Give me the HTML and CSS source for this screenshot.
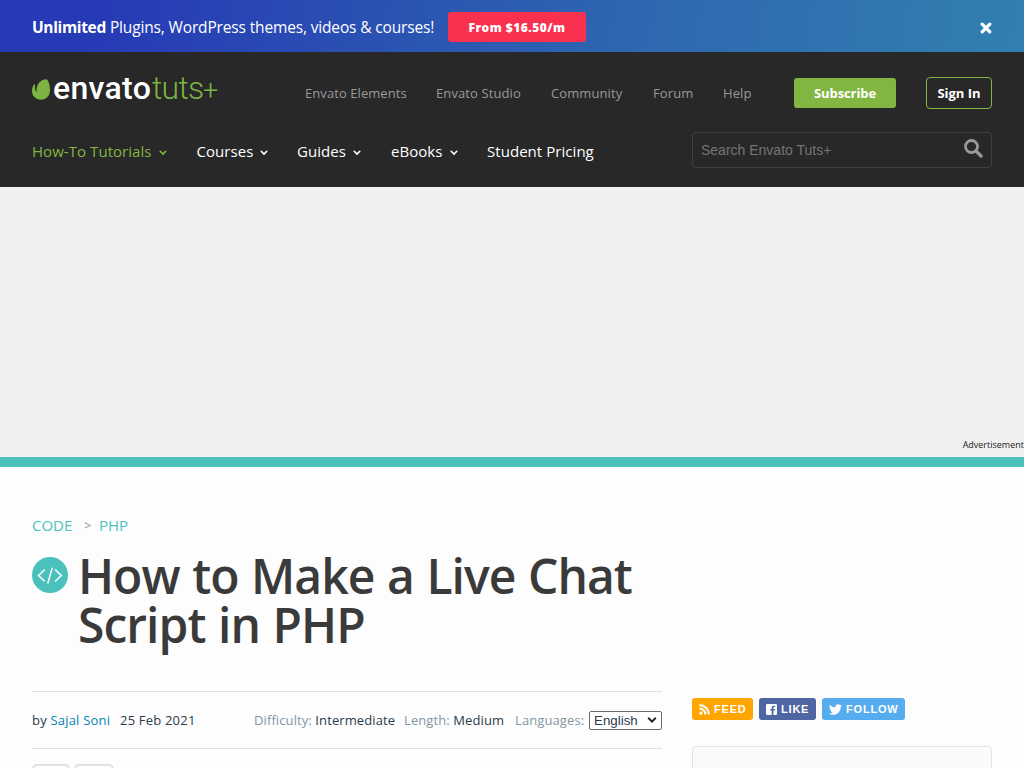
FILE: index.html
```html
<!DOCTYPE html>
<html lang="en">
<head>
<meta charset="utf-8">
<title>How to Make a Live Chat Script in PHP</title>
<link rel="stylesheet" href="styles.css">
</head>
<body>
<svg class="sprites" width="0" height="0"><symbol id="chev" viewBox="0 0 8 6"><path d="M1.2 1.3 4 4.1 6.8 1.3" fill="none" stroke="currentColor" stroke-width="1.6" stroke-linecap="round"/></symbol></svg>
<div class="promo">
  <p class="promo-text"><b>Unlimited</b> <span>Plugins, WordPress themes, videos &amp; courses!</span></p>
  <a class="promo-btn">From $16.50/m</a>
  <svg class="close" viewBox="0 0 12 12"><path d="M2.2 2.2 9.8 9.8M9.8 2.2 2.2 9.8" stroke="#fff" stroke-width="3.2" stroke-linecap="round"/></svg>
</div>
<header class="header">
  <div class="row top">
    <div class="logo">
      <svg class="leaf" viewBox="0 0 18 21"><path d="M14.8.4C16.600 1.500 18 6.500 18 11C18 17 14 20.700 9 20.700C3.800 20.700 0 17 0 12C0 9 .9 6.500 2.300 5.200C2.900 4.900 3.100 5.300 3 6C2.700 9 3.100 11.500 4.700 13.300C3.800 8.500 5.500 4.500 8.800 2.200C11 .6 13.600-.1 14.800.4Z" fill="#7cb342"/></svg>
      <span class="envato">envato</span><span class="tuts">tuts</span><span class="plus">+</span>
    </div>
    <nav class="links"><a class="l1">Envato Elements</a><a class="l2">Envato Studio</a><a class="l3">Community</a><a class="l4">Forum</a><a class="l5">Help</a></nav>
    <a class="subscribe">Subscribe</a><a class="signin">Sign In</a>
  </div>
  <div class="row bottom">
    <nav class="main">
      <a class="m1">How-To Tutorials<svg><use href="#chev"/></svg></a>
      <a class="m2">Courses<svg><use href="#chev"/></svg></a>
      <a class="m3">Guides<svg><use href="#chev"/></svg></a>
      <a class="m4">eBooks<svg><use href="#chev"/></svg></a>
      <a class="m5">Student Pricing</a>
    </nav>
    <div class="search"><span>Search Envato Tuts+</span><svg viewBox="0 0 19 19"><circle cx="7.500" cy="7.500" r="6" fill="none" stroke="#999" stroke-width="2.800"/><path d="m12.200 12.200 4.900 4.900" stroke="#999" stroke-width="3.300" stroke-linecap="round"/></svg></div>
  </div>
</header>
<div class="ad"><span>Advertisement</span></div>
<main class="page">
  <article class="content">
    <div class="crumbs"><a class="c1">CODE</a><i>&gt;</i><a class="c2">PHP</a></div>
    <div class="title">
      <svg class="code" viewBox="0 0 36 36"><circle cx="18" cy="18" r="18" fill="#4bc1be"/><path d="m12.700 12.500-6.200 6 6.200 6m10.400-12 6.200 6-6.200 6M20.300 10.800l-4.600 15.700" fill="none" stroke="#fff" stroke-width="1.500"/></svg>
      <h1>How to Make a Live Chat<br>Script in PHP</h1>
    </div>
    <div class="meta">
      <span class="by">by <a>Sajal Soni</a></span><span class="date">25 Feb 2021</span>
      <span class="diff"><em>Difficulty:</em> Intermediate</span>
      <span class="len"><em>Length:</em> Medium</span>
      <span class="lang"><em>Languages:</em></span>
      <span class="select">English<svg viewBox="0 0 10 8"><path d="m1.200 1.800 3.800 3.800 3.800-3.800" fill="none" stroke="#222" stroke-width="2"/></svg></span>
    </div>
    <div class="pills"><span></span><span></span></div>
  </article>
  <aside class="side">
    <div class="social">
      <a class="feed"><svg viewBox="0 0 12 12"><circle cx="2" cy="10" r="1.700" fill="#fff"/><path d="M.5 5a6.500 6.500 0 0 1 6.500 6.500M.5 1.200A10.300 10.300 0 0 1 10.800 11.500" fill="none" stroke="#fff" stroke-width="2.300"/></svg>FEED</a>
      <a class="like"><svg viewBox="0 0 12 12"><path d="M1.300 0h9.400A1.300 1.300 0 0 1 12 1.300v9.400a1.300 1.300 0 0 1-1.300 1.300H8.100V7.200h1.500l.3-1.800H8.100V4.300c0-.6.300-.9.900-.9h1V1.900H8.400C6.900 1.900 6.200 2.800 6.200 4.200v1.200H4.800v1.800h1.400V12H1.300A1.300 1.300 0 0 1 0 10.700V1.300A1.300 1.300 0 0 1 1.300 0Z" fill="#fff"/></svg>LIKE</a>
      <a class="follow"><svg viewBox="0 0 24 24"><path d="M24 4.600c-.9.400-1.800.7-2.800.8 1-.6 1.800-1.600 2.200-2.700-1 .6-2 1-3.100 1.200a4.900 4.900 0 0 0-8.400 4.500C7.700 8.200 4.100 6.300 1.700 3.200a4.900 4.900 0 0 0 1.500 6.500c-.8 0-1.600-.2-2.200-.6v.1a4.900 4.900 0 0 0 3.900 4.800c-.7.200-1.500.2-2.200.1a4.900 4.900 0 0 0 4.600 3.400A9.900 9.900 0 0 1 0 19.500a14 14 0 0 0 7.500 2.200c9.100 0 14.300-7.700 14-14.600 1-.7 1.800-1.600 2.500-2.500Z" fill="#fff"/></svg>FOLLOW</a>
    </div>
    <div class="card"></div>
  </aside>
</main>
</body>
</html>
```
FILE: styles.css
```css
* { box-sizing: border-box; }
html, body { height: 768px; overflow: hidden; }
body { margin: 0; background: #fdfdfd; font-family: "Open Sans", "Noto Sans", sans-serif; color: #3a3a3a; display: flex; flex-direction: column; }
a, span, em, i, b { white-space: nowrap; }
svg { flex: none; }
.sprites { display: none; }
.promo { height: 52px; flex: none; display: flex; align-items: center; padding: 0 32px; color: #fff; background: linear-gradient(100deg, #263ab5 10%, #2e67b0 62%, #3180b0 100%); }
.promo-text { margin: 1px 0 0; width: 416px; font-size: 15.500px; line-height: 24px; }
.promo-text b { letter-spacing: -.35px; }
.promo-text span { letter-spacing: -.15px; }
.promo-btn { width: 138px; height: 30px; margin-top: 2px; border-radius: 3px; background: #f9314f; font-weight: 800; font-size: 12px; line-height: 31px; text-align: center; letter-spacing: .5px; }
.close { width: 12px; height: 12px; margin: 4px 0 0 auto; }
.header { height: 135px; flex: none; background: #282828; padding: 25px 32px 0; }
.row { display: flex; }
.top { height: 55px; align-items: flex-start; }
.logo { width: 273px; height: 32px; display: flex; align-items: flex-start; font-family: Roboto, sans-serif; line-height: 22px; }
.leaf { width: 18px; height: 21px; margin-top: 2px; }
.envato { font-weight: 500; font-size: 32px; letter-spacing: .3px; color: #fff; width: 99px; margin-left: 3px; }
.tuts { width: 51px; font-weight: 300; font-size: 32px; letter-spacing: -.7px; color: #7cb342; }
.plus { font-weight: 300; font-size: 27px; line-height: 28px; color: #7cb342; }
.links { display: flex; font-size: 13px; line-height: 32px; letter-spacing: .1px; color: #999; }
.l1 { width: 131px; letter-spacing: .07px; } .l2 { width: 115px; } .l3 { width: 102px; } .l4 { width: 70px; } .l5 { width: 71px; }
.subscribe { width: 102px; height: 30px; margin-top: 1px; border-radius: 3px; background: #82b541; color: #fff; font-weight: 700; font-size: 13px; line-height: 30px; text-align: center; letter-spacing: -.1px; }
.signin { width: 66px; height: 32px; margin-left: 30px; border: 1px solid #82b541; border-radius: 4px; color: #fff; font-weight: 700; font-size: 13px; line-height: 30px; text-align: center; }
.main { width: 660px; display: flex; padding-top: 7px; font-size: 15px; line-height: 24px; letter-spacing: .05px; color: #fff; }
.main svg { width: 8px; height: 6px; margin-left: 7px; vertical-align: 1px; }
.m1 { width: 164.500px; color: #82b541; } .m2 { width: 100.500px; } .m3 { width: 94px; } .m4 { width: 96px; }
.search { width: 300px; height: 36px; border: 1px solid #404040; border-radius: 4px; padding: 0 8px; display: flex; justify-content: space-between; font: 14px/34px "Liberation Sans", Arial, sans-serif; color: #757575; }
.search svg { width: 19px; height: 19px; margin-top: 6px; }
.ad { height: 280px; flex: none; border-bottom: 10px solid #4bc1be; background: repeating-linear-gradient(45deg, #f5f5f5 0 1.414px, #ebebeb 1.414px 2.828px); display: flex; align-items: flex-end; justify-content: flex-end; }
.ad span { font-size: 9px; line-height: 12px; padding-bottom: 6px; color: #222; }
.page { display: flex; padding: 0 32px; }
.content { width: 630px; }
.crumbs { padding-top: 46px; height: 83px; display: flex; font-size: 15px; line-height: 24px; color: #4bc1be; }
.c1 { width: 52px; } .crumbs i { width: 15px; font-style: normal; font-size: 13px; color: #8795a0; }
.title { height: 141px; display: flex; }
.code { width: 36px; height: 36px; margin-top: 7px; }
h1 { margin: 1px 0 0 10px; font-weight: 550; font-size: 48px; line-height: 49px; letter-spacing: -.95px; word-spacing: 1px; }
.meta { height: 58px; border: solid #e1e2e3; border-width: 1px 0; display: flex; align-items: center; font-size: 13px; letter-spacing: .1px; color: #2b3b4b; }
.by { width: 88px; letter-spacing: .2px; } .by a { color: #0084b4; } .date { width: 134px; letter-spacing: .2px; } .diff { width: 150px; } .len { width: 111px; } .lang { width: 74px; }
em { font-style: normal; color: #8497a5; }
.select { width: 73px; height: 19px; border: 1px solid #6b6b6b; border-radius: 2px; background: #fff; padding: 0 4px; display: flex; justify-content: space-between; align-items: center; font: 13.333px "Liberation Sans", Arial, sans-serif; letter-spacing: 0; }
.select svg { width: 10px; height: 8px; }
.pills { display: flex; gap: 4px; padding-top: 15px; }
.pills span { width: 38px; height: 24px; border: 2px solid #e1e2e3; border-radius: 5px; }
.pills span + span { width: 40px; }
.side { width: 300px; margin-left: 30px; padding-top: 231px; }
.social { display: flex; gap: 6px; height: 48px; font: bold 11px "Liberation Sans", Arial, sans-serif; letter-spacing: .8px; color: #fff; }
.social a { height: 22px; border-radius: 3px; display: flex; align-items: center; padding-left: 7px; gap: 4px; }
.social svg { width: 11px; height: 11px; }
.social .follow svg { width: 13px; height: 13px; }
.feed { width: 61px; background: #ffa500; } .like { width: 57px; background: #4e66a3; } .follow { width: 83px; background: #55acee; }
.card { height: 60px; border: 1px solid #dfe5ea; border-radius: 4px; background: #fafafa; }
```
